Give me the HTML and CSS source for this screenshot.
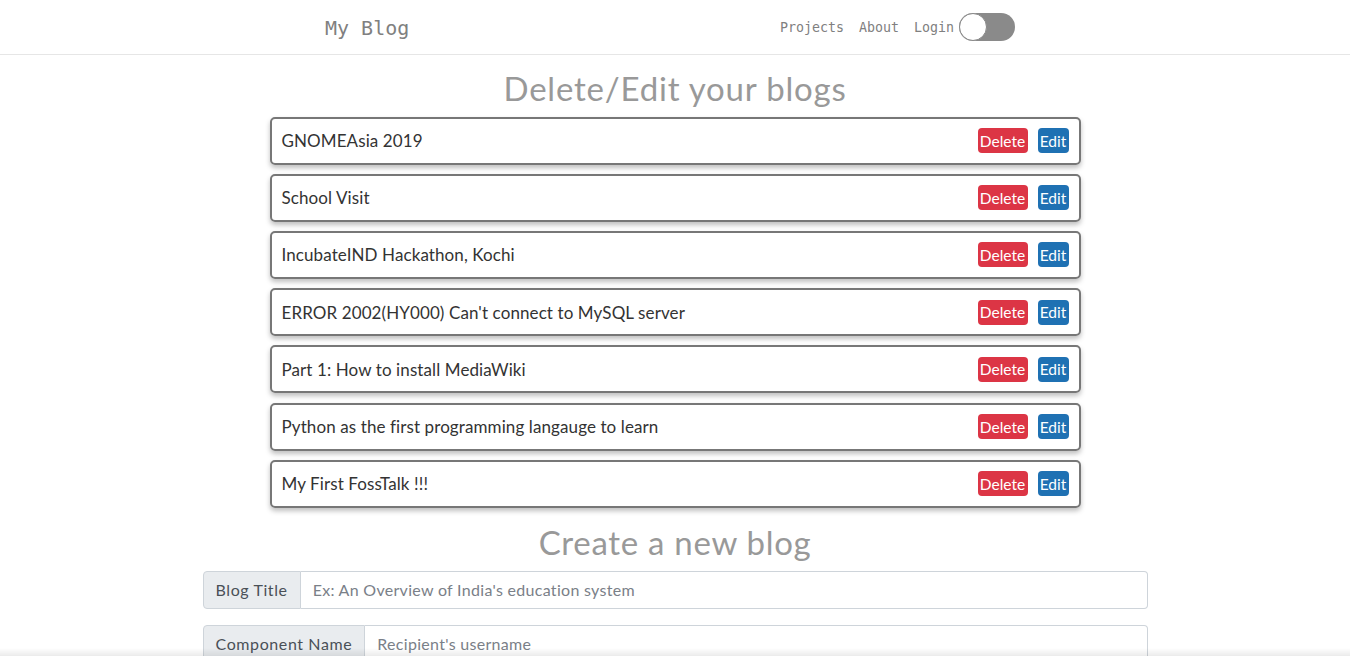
FILE: index.html
```html
<!DOCTYPE html>
<html>
<head>
<meta charset="utf-8">
<title>My Blog</title>
<link rel="stylesheet" href="styles.css">
</head>
<body>
<header class="navbar">
  <div class="nav-inner">
    <a class="brand" href="#">My Blog</a>
    <nav class="nav-links">
      <a href="#">Projects</a>
      <a href="#">About</a>
      <a href="#">Login</a>
      <span class="toggle"><span class="knob"></span></span>
    </nav>
  </div>
</header>
<main>
  <h2 class="title">Delete/Edit your blogs</h2>
  <ul class="blog-list">
    <li class="blog-card"><span class="blog-name">GNOMEAsia 2019</span><span class="actions"><button class="btn btn-delete">Delete</button><button class="btn btn-edit">Edit</button></span></li>
    <li class="blog-card"><span class="blog-name">School Visit</span><span class="actions"><button class="btn btn-delete">Delete</button><button class="btn btn-edit">Edit</button></span></li>
    <li class="blog-card"><span class="blog-name">IncubateIND Hackathon, Kochi</span><span class="actions"><button class="btn btn-delete">Delete</button><button class="btn btn-edit">Edit</button></span></li>
    <li class="blog-card"><span class="blog-name">ERROR 2002(HY000) Can't connect to MySQL server</span><span class="actions"><button class="btn btn-delete">Delete</button><button class="btn btn-edit">Edit</button></span></li>
    <li class="blog-card"><span class="blog-name">Part 1: How to install MediaWiki</span><span class="actions"><button class="btn btn-delete">Delete</button><button class="btn btn-edit">Edit</button></span></li>
    <li class="blog-card"><span class="blog-name">Python as the first programming langauge to learn</span><span class="actions"><button class="btn btn-delete">Delete</button><button class="btn btn-edit">Edit</button></span></li>
    <li class="blog-card"><span class="blog-name">My First FossTalk !!!</span><span class="actions"><button class="btn btn-delete">Delete</button><button class="btn btn-edit">Edit</button></span></li>
  </ul>
  <h2 class="title title-create">Create a new blog</h2>
  <form class="blog-form">
    <div class="input-group">
      <span class="input-label">Blog Title</span>
      <input class="input-field" type="text" placeholder="Ex: An Overview of India's education system">
    </div>
    <div class="input-group">
      <span class="input-label">Component Name</span>
      <input class="input-field" type="text" placeholder="Recipient's username">
    </div>
  </form>
</main>
<div class="bottom-shade"></div>
</body>
</html>
```
FILE: styles.css
```css
* { box-sizing: border-box; }
html, body { margin: 0; padding: 0; }
body {
  font-family: "Lato", "Open Sans", sans-serif;
  background: #fff;
  color: #333;
  overflow: hidden;
}
.navbar {
  height: 55px;
  border-bottom: 1px solid #e6e6e6;
}
.nav-inner {
  height: 54px;
  margin: 0 335px 0 325px;
  display: flex;
  align-items: center;
  justify-content: space-between;
}
.brand {
  font-family: "DejaVu Sans Mono", monospace;
  font-size: 20px;
  color: #808080;
  text-decoration: none;
  margin-top: 1px;
}
.nav-links {
  display: flex;
  align-items: center;
}
.nav-links a {
  font-family: "DejaVu Sans Mono", monospace;
  font-size: 13.3px;
  color: #808080;
  text-decoration: none;
  margin-left: 15px;
  margin-top: 1px;
}
.nav-links a:first-child { margin-left: 0; }
.toggle {
  width: 56px;
  height: 28px;
  border-radius: 14px;
  background: #8a8a8a;
  margin-left: 5px;
  display: flex;
  align-items: center;
}
.knob {
  width: 28px;
  height: 28px;
  border-radius: 50%;
  background: #fff;
  border: 1px solid #888;
}
main { display: flex; flex-direction: column; align-items: center; }
.title {
  font-weight: 400;
  font-size: 33px;
  letter-spacing: 0.8px;
  color: #999;
  margin: 14px 0 8px;
  line-height: 1.2;
}
.title-create { margin-top: 6px; letter-spacing: 0.7px; }
.blog-list {
  list-style: none;
  margin: 0;
  padding: 0;
  width: 811px;
}
.blog-card {
  height: 48px;
  border: 2px solid #777;
  border-radius: 5px;
  box-shadow: 0 3px 5px rgba(0,0,0,0.25);
  display: flex;
  align-items: center;
  justify-content: space-between;
  padding: 0 10px;
  margin-bottom: 9.2px;
  font-size: 17px;
  letter-spacing: 0.1px;
  color: #333;
}
.actions { display: flex; gap: 10px; }
.btn {
  font-family: inherit;
  font-size: 15.5px;
  color: #fff;
  border: none;
  border-radius: 4px;
  height: 25px;
  padding: 0 2px;
  cursor: pointer;
}
.btn-delete { background: #dc3545; width: 50px; }
.btn-edit { background: #1f71b3; width: 31px; }
.blog-form { width: 945px; }
.input-group {
  display: flex;
  height: 38px;
  margin-bottom: 16px;
}
.input-label {
  display: flex;
  align-items: center;
  padding: 0 12px;
  background: #e9ecef;
  border: 1px solid #ced4da;
  border-radius: 4px 0 0 4px;
  color: #495057;
  font-size: 16px;
  letter-spacing: 0.6px;
  white-space: nowrap;
}
.input-field {
  flex: 1;
  border: 1px solid #ced4da;
  border-left: none;
  border-radius: 0 4px 4px 0;
  padding: 0 12px;
  font-family: inherit;
  font-size: 16px;
  letter-spacing: 0.3px;
  color: #495057;
}
.input-field::placeholder { color: #7a8088; }
.bottom-shade {
  position: fixed;
  left: 0; right: 0; bottom: 0;
  height: 8px;
  background: linear-gradient(to bottom, rgba(0,0,0,0), rgba(0,0,0,0.08));
  pointer-events: none;
}
```
